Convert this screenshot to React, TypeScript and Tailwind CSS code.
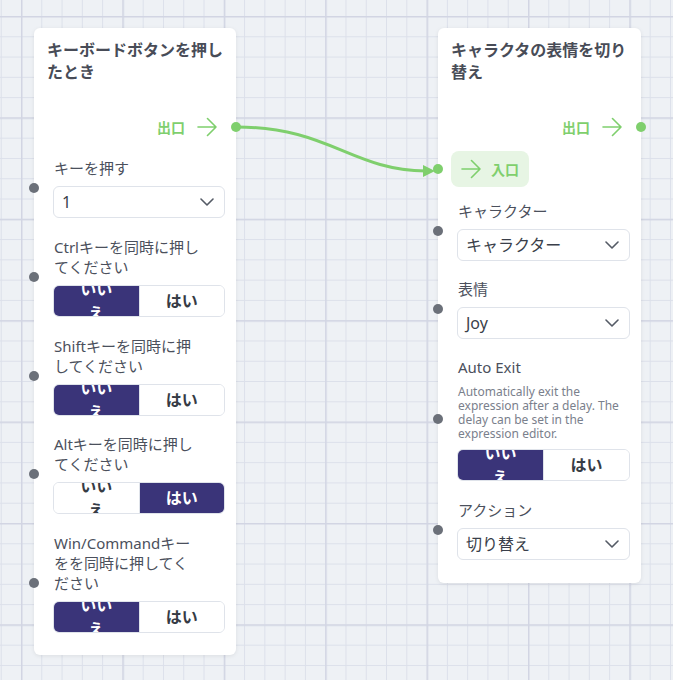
import React from 'react';

const font = "font-['Noto_Sans','Noto_Sans_CJK_JP',sans-serif]";

const Arrow = () => (
  <svg width="20" height="20" viewBox="0 0 20 20" fill="none" stroke="#7fcf6d" strokeWidth="1.6" strokeLinecap="round" strokeLinejoin="round">
    <path d="M1 10h18M10.5 1.5 19 10l-8.5 8.5" />
  </svg>
);

const Chevron = () => (
  <svg width="14" height="8" viewBox="0 0 14 8" fill="none" stroke="#555b66" strokeWidth="1.6" strokeLinecap="round" strokeLinejoin="round">
    <path d="M1 1l6 6 6-6" />
  </svg>
);

const InDot = () => (
  <div className="absolute left-[-25px] top-1/2 h-[10px] w-[10px] -translate-y-1/2 rounded-full bg-[#6b7079]" />
);

type FieldProps = {
  label: string[];
  children: React.ReactNode;
};

// label + control, with the input socket on the card edge
const Field = ({ label, children }: FieldProps) => {
  return (
    <div className="relative">
      <InDot />
      <div className="mb-2 text-[15px] leading-5 text-[#4b505c]">
        {label.map((l) => (
          <div key={l} className="whitespace-nowrap">{l}</div>
        ))}
      </div>
      {children}
    </div>
  );
};

const Select = ({ value }: { value: string }) => (
  <div className="-ml-px flex h-8 items-center justify-between rounded-md border border-[#dfe3ea] bg-white pl-2 pr-[10px] text-[16px] text-[#3a3f4a]">
    <span>{value}</span>
    <Chevron />
  </div>
);

const Toggle = ({ yes }: { yes: boolean }) => {
  const on = 'bg-[#3a3479] text-white';
  const off = 'bg-white text-[#363b45]';
  return (
    <div className="-ml-px flex h-8 overflow-hidden rounded-md border border-[#dfe3ea] text-[16px] font-bold">
      <div className={`flex flex-1 items-center justify-center px-5 text-center leading-6 ${yes ? off : on}`}>
        いいえ
      </div>
      <div className={`flex flex-1 items-center justify-center border-l border-[#dfe3ea] px-5 leading-6 ${yes ? on : off}`}>
        はい
      </div>
    </div>
  );
};

const Output = () => (
  <div className="relative mt-[34px] flex h-5 items-center justify-end gap-3 pr-[19px]">
    <span className="text-[14px] font-bold text-[#7fcf6d]">出口</span>
    <Arrow />
    <div className="absolute right-[-5px] top-1/2 h-[10px] w-[10px] -translate-y-1/2 rounded-full bg-[#7fcf6d]" />
  </div>
);

const Grid = () => (
  <svg className="absolute inset-0" width="673" height="680">
    <defs>
      <pattern id="minor" x="21" y="16" width="20.28" height="20.28" patternUnits="userSpaceOnUse">
        <rect x="0" y="0" width="1" height="20.28" fill="#dce0ea" />
        <rect x="0" y="0" width="20.28" height="1" fill="#dce0ea" />
      </pattern>
      <pattern id="major" x="21" y="16" width="101.4" height="101.4" patternUnits="userSpaceOnUse">
        <rect x="0" y="0" width="1.5" height="101.4" fill="#d2d5e3" />
        <rect x="0" y="0" width="101.4" height="1.5" fill="#d2d5e3" />
      </pattern>
    </defs>
    <rect width="673" height="680" fill="url(#minor)" />
    <rect width="673" height="680" fill="url(#major)" />
  </svg>
);

export default function App() {
  return (
    <div className={`relative h-[680px] w-[673px] overflow-hidden bg-[#eef1f5] ${font}`}>
      <Grid />

      {/* Node: key pressed */}
      <div className="absolute left-[34px] top-[28px] w-[202px] rounded-md bg-white shadow-[0_1px_4px_rgba(0,0,0,0.08)]">
        <div className="px-[13px] pt-[11px] text-[16px] font-bold leading-[22px] text-[#484c57]">
          キーボードボタンを押し<br />たとき
        </div>
        <Output />
        <div className="mt-[21px] flex flex-col gap-[18.8px] pb-[22px] pl-5 pr-[11px]">
          <Field label={['キーを押す']}>
            <Select value="1" />
          </Field>
          <Field label={['Ctrlキーを同時に押し', 'てください']}>
            <Toggle yes={false} />
          </Field>
          <Field label={['Shiftキーを同時に押', 'してください']}>
            <Toggle yes={false} />
          </Field>
          <Field label={['Altキーを同時に押し', 'てください']}>
            <Toggle yes={true} />
          </Field>
          <Field label={['Win/Commandキー', 'をを同時に押してく', 'ださい']}>
            <Toggle yes={false} />
          </Field>
        </div>
      </div>

      {/* Node: change expression */}
      <div className="absolute left-[438px] top-[28px] w-[203px] rounded-md bg-white shadow-[0_1px_4px_rgba(0,0,0,0.08)]">
        <div className="px-[13px] pt-[11px] text-[16px] font-bold leading-[22px] text-[#484c57]">
          キャラクタの表情を切り<br />替え
        </div>
        <Output />
        <div className="relative ml-[13px] mt-[14px] flex h-9 w-[78px] items-center gap-[10px] rounded-lg bg-[#e7f5e4] pl-[10px]">
          <Arrow />
          <span className="text-[14px] font-bold text-[#7fcf6d]">入口</span>
          <div className="absolute left-[-18px] top-1/2 h-[10px] w-[10px] -translate-y-1/2 rounded-full bg-[#7fcf6d]" />
        </div>
        <div className="mt-[14px] flex flex-col gap-[18px] pb-[23px] pl-5 pr-[11px]">
          <Field label={['キャラクター']}>
            <Select value="キャラクター" />
          </Field>
          <Field label={['表情']}>
            <Select value="Joy" />
          </Field>
          <Field label={['Auto Exit']}>
            <div className="mb-2 text-[12px] leading-[14px] text-[#7a808c]">
              <div className="whitespace-nowrap">Automatically exit the</div>
              <div className="whitespace-nowrap">expression after a delay. The</div>
              <div className="whitespace-nowrap">delay can be set in the</div>
              <div className="whitespace-nowrap">expression editor.</div>
            </div>
            <Toggle yes={false} />
          </Field>
          <div className="mt-px">
            <Field label={['アクション']}>
              <Select value="切り替え" />
            </Field>
          </div>
        </div>
      </div>

      {/* Connection */}
      <svg className="pointer-events-none absolute inset-0" width="673" height="680">
        <path d="M236 127 C 330 127, 350 170, 426 171" fill="none" stroke="#7fcf6d" strokeWidth="3" />
        <path d="M423 165 L435 171 L423 177 Z" fill="#7fcf6d" />
      </svg>
    </div>
  );
}
